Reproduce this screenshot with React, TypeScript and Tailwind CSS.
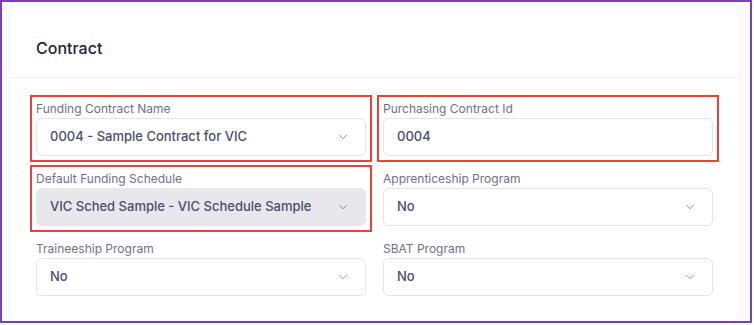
import { ChevronDown } from "lucide-react"

type Field = {
  label: string
  value: string
  kind: "select" | "input"
  disabled?: boolean
  marked?: boolean
}

const fields: Field[] = [
  { label: "Funding Contract Name", value: "0004 - Sample Contract for VIC", kind: "select", marked: true },
  { label: "Purchasing Contract Id", value: "0004", kind: "input", marked: true },
  { label: "Default Funding Schedule", value: "VIC Sched Sample - VIC Schedule Sample", kind: "select", disabled: true, marked: true },
  { label: "Apprenticeship Program", value: "No", kind: "select" },
  { label: "Traineeship Program", value: "No", kind: "select" },
  { label: "SBAT Program", value: "No", kind: "select" },
]

function FormField({ field }: { field: Field }) {
  return (
    <div
      className={
        field.marked
          ? "flex flex-col outline-2 outline-[#e8423b] outline-offset-[4px]"
          : "flex flex-col"
      }
    >
      <label className="text-[12px] leading-4 text-[#6f7088] mb-[1px]">{field.label}</label>
      <div
        className={
          "flex items-center justify-between h-[38px] rounded-md pl-[13px] pr-[15px] " +
          (field.disabled ? "bg-[#e8e8ec] border border-[#e8e8ec]" : "bg-white border border-[#e2e4ec]")
        }
      >
        <span className="text-[13px] font-medium text-[#4b4e69]">{field.value}</span>
        {field.kind === "select" && <ChevronDown size={14} strokeWidth={1.5} className="text-[#7a7c93]" />}
      </div>
    </div>
  )
}

export default function App() {
  return (
    <div className="w-[754px] h-[325px] bg-white" style={{ fontFamily: "Inter, 'Noto Sans', sans-serif" }}>
      <div className="w-[752px] h-[323px] border-2 border-[#7d40b3] bg-[#fbfbfc] pt-[3px] pl-[8px] pr-[11px]">
        <div className="bg-white rounded-lg shadow-[0_0_3px_rgba(0,0,0,0.05)] h-full">
          {/* Header */}
          <div className="h-[73px] flex items-center px-[26px] pt-[13px] border-b border-[#edf0f6]">
            <h2 className="text-[16px] font-medium text-[#1f2236]">Contract</h2>
          </div>

          {/* Form grid */}
          <div className="grid grid-cols-2 gap-x-[17px] gap-y-[15px] pl-[26px] pr-[26px] pt-[23px]">
            {fields.map((f) => (
              <FormField key={f.label} field={f} />
            ))}
          </div>
        </div>
      </div>
    </div>
  )
}
